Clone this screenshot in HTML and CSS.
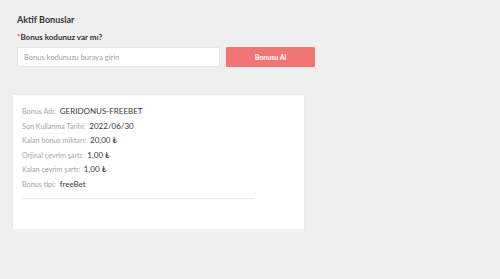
FILE: index.html
```html
<!DOCTYPE html>
<html lang="tr">
<head>
  <meta charset="UTF-8" />
  <title>Aktif Bonuslar</title>
  <link rel="stylesheet" href="styles.css">
</head>
<body>
  <main class="page">
    <h2 class="title">Aktif Bonuslar</h2>
    <label class="code-label" for="bonusCode"><span class="req">*</span>Bonus kodunuz var mı?</label>
    <div class="code-row">
      <input id="bonusCode" class="code-input" type="text" placeholder="Bonus kodunuzu buraya girin" />
      <button class="code-btn">Bonusu Al</button>
    </div>

    <div class="card">
      <div class="row"><span class="key">Bonus Adı:</span><span class="val">GERIDONUS-FREEBET</span></div>
      <div class="row"><span class="key">Son Kullanma Tarihi:</span><span class="val">2022/06/30</span></div>
      <div class="row"><span class="key">Kalan bonus miktarı:</span><span class="val">20,00 ₺</span></div>
      <div class="row"><span class="key">Orjinal çevrim şartı:</span><span class="val">1,00 ₺</span></div>
      <div class="row"><span class="key">Kalan çevrim şartı:</span><span class="val">1,00 ₺</span></div>
      <div class="row"><span class="key">Bonus tipi:</span><span class="val">freeBet</span></div>
      <hr class="sep" />
    </div>
  </main>
</body>
</html>
```

FILE: styles.css
```css
* {
  box-sizing: border-box;
}
html, body {
  margin: 0;
  background: #efefef;
}
body {
  font-family: Lato, "Noto Sans", sans-serif;
  color: #333;
}
.page {
  padding: 13px 0 0 13px;
  width: 320px;
}
.title {
  margin: 0 0 0 4px;
  font-size: 9px;
  font-weight: bold;
  color: #333;
  line-height: 14px;
}
.code-label {
  display: block;
  margin: 4px 0 0 4px;
  font-size: 8px;
  font-weight: bold;
  line-height: 12px;
  color: #333;
}
.req {
  color: #e05555;
}
.code-row {
  display: flex;
  gap: 6px;
  margin: 4px 0 0 4px;
}
.code-input {
  width: 203px;
  height: 20px;
  border: 1px solid #e6e6e6;
  border-radius: 1px;
  background: white;
  padding: 0 6px;
  font-family: inherit;
  font-size: 7.5px;
  outline: none;
}
.code-input::placeholder {
  color: #a0a0a0;
}
.code-btn {
  width: 89px;
  height: 20px;
  border: none;
  border-radius: 1px;
  background: #f47476;
  color: white;
  font-family: inherit;
  font-size: 7px;
  font-weight: bold;
}
.card {
  margin-top: 28px;
  width: 291px;
  height: 134px;
  background: white;
  box-shadow: 0 0 3px rgba(0, 0, 0, 0.06);
  padding: 9px 50px 0 9px;
}
.row {
  display: flex;
  align-items: baseline;
  height: 14.6px;
  line-height: 14.6px;
  white-space: nowrap;
}
.key {
  color: #a5a5a5;
  font-size: 7.2px;
  margin-right: 4px;
}
.val {
  color: #3a3a3a;
  font-size: 8px;
}
.sep {
  margin: 6px 0 0;
  border: none;
  border-top: 1px solid #e6e6e6;
}
```
